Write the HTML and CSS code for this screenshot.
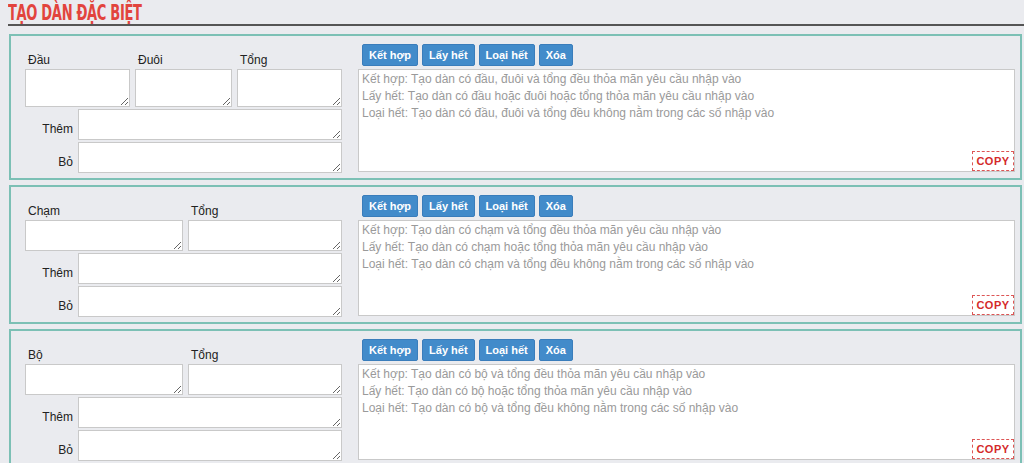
FILE: index.html
```html
<!DOCTYPE html>
<html lang="vi">
<head>
    <meta charset="UTF-8">
    <meta name="viewport" content="width=device-width, initial-scale=1.0">
    <title>Tạo dàn đặc biệt</title>
    <link rel="stylesheet" href="styles.css">
</head>
<body>
    <h1 class="title"><span>TẠO DÀN ĐẶC BIỆT</span></h1>

    <!-- Đầu / Đuôi / Tổng -->
    <div class="panel">
        <div class="inputs">
            <div class="top-row cols-3">
                <div class="field">
                    <label for="dau">Đầu</label>
                    <textarea id="dau" class="tall"></textarea>
                </div>
                <div class="field">
                    <label for="duoi">Đuôi</label>
                    <textarea id="duoi" class="tall"></textarea>
                </div>
                <div class="field">
                    <label for="tong1">Tổng</label>
                    <textarea id="tong1" class="tall"></textarea>
                </div>
            </div>
            <div class="side-row">
                <label for="them1">Thêm</label>
                <textarea id="them1"></textarea>
            </div>
            <div class="side-row">
                <label for="bo1">Bỏ</label>
                <textarea id="bo1"></textarea>
            </div>
        </div>
        <div class="result">
            <div class="actions">
                <button>Kết hợp</button>
                <button>Lấy hết</button>
                <button>Loại hết</button>
                <button>Xóa</button>
            </div>
            <div class="output">
                <textarea placeholder="Kết hợp: Tạo dàn có đầu, đuôi và tổng đều thỏa mãn yêu cầu nhập vào&#10;Lấy hết: Tạo dàn có đầu hoặc đuôi hoặc tổng thỏa mãn yêu cầu nhập vào&#10;Loại hết: Tạo dàn có đầu, đuôi và tổng đều không nằm trong các số nhập vào"></textarea>
                <span class="copy">COPY</span>
            </div>
        </div>
    </div>

    <!-- Chạm / Tổng -->
    <div class="panel">
        <div class="inputs">
            <div class="top-row cols-2">
                <div class="field">
                    <label for="cham">Chạm</label>
                    <textarea id="cham"></textarea>
                </div>
                <div class="field">
                    <label for="tong2">Tổng</label>
                    <textarea id="tong2"></textarea>
                </div>
            </div>
            <div class="side-row">
                <label for="them2">Thêm</label>
                <textarea id="them2"></textarea>
            </div>
            <div class="side-row">
                <label for="bo2">Bỏ</label>
                <textarea id="bo2"></textarea>
            </div>
        </div>
        <div class="result">
            <div class="actions">
                <button>Kết hợp</button>
                <button>Lấy hết</button>
                <button>Loại hết</button>
                <button>Xóa</button>
            </div>
            <div class="output">
                <textarea placeholder="Kết hợp: Tạo dàn có chạm và tổng đều thỏa mãn yêu cầu nhập vào&#10;Lấy hết: Tạo dàn có chạm hoặc tổng thỏa mãn yêu cầu nhập vào&#10;Loại hết: Tạo dàn có chạm và tổng đều không nằm trong các số nhập vào"></textarea>
                <span class="copy">COPY</span>
            </div>
        </div>
    </div>

    <!-- Bộ / Tổng -->
    <div class="panel">
        <div class="inputs">
            <div class="top-row cols-2">
                <div class="field">
                    <label for="bo">Bộ</label>
                    <textarea id="bo"></textarea>
                </div>
                <div class="field">
                    <label for="tong3">Tổng</label>
                    <textarea id="tong3"></textarea>
                </div>
            </div>
            <div class="side-row">
                <label for="them3">Thêm</label>
                <textarea id="them3"></textarea>
            </div>
            <div class="side-row">
                <label for="bo3">Bỏ</label>
                <textarea id="bo3"></textarea>
            </div>
        </div>
        <div class="result">
            <div class="actions">
                <button>Kết hợp</button>
                <button>Lấy hết</button>
                <button>Loại hết</button>
                <button>Xóa</button>
            </div>
            <div class="output">
                <textarea placeholder="Kết hợp: Tạo dàn có bộ và tổng đều thỏa mãn yêu cầu nhập vào&#10;Lấy hết: Tạo dàn có bộ hoặc tổng thỏa mãn yêu cầu nhập vào&#10;Loại hết: Tạo dàn có bộ và tổng đều không nằm trong các số nhập vào"></textarea>
                <span class="copy">COPY</span>
            </div>
        </div>
    </div>
</body>
</html>
```

FILE: styles.css
```css
body {
    margin: 0;
    background-color: #eaebef;
    font-family: "Liberation Sans", Arial, sans-serif;
    font-size: 12px;
    color: #222;
}
.title {
    margin: 0 0 8px 8px;
    padding-top: 2px;
    height: 22px;
    border-bottom: 2px solid #555;
    font-family: "Liberation Sans Narrow", "DejaVu Sans Condensed", sans-serif;
    font-size: 22px;
    font-weight: bold;
    line-height: 22px;
    color: #e2443d;
}
.title span {
    display: inline-block;
    transform: scaleX(0.66);
    transform-origin: left center;
    letter-spacing: -0.5px;
}
.panel {
    display: flex;
    gap: 16px;
    margin: 0 2px 5px 9px;
    padding: 8px 5px 5px 14px;
    border: 2px solid #7cc0b5;
}
.inputs {
    width: 317px;
    flex-shrink: 0;
}
textarea {
    display: block;
    box-sizing: border-box;
    width: 100%;
    height: 31px;
    margin: 0;
    padding: 2px 3px;
    border: 1px solid #c9c9c9;
    background-color: #fff;
    font-family: "Liberation Sans", Arial, sans-serif;
    font-size: 12px;
}
textarea.tall {
    height: 38px;
}
.top-row {
    display: grid;
    column-gap: 5px;
}
.cols-3 {
    grid-template-columns: 105px 97px 105px;
}
.cols-2 {
    grid-template-columns: 158px 154px;
}
.field label {
    display: block;
    height: 25px;
    box-sizing: border-box;
    padding: 9px 0 0 3px;
    line-height: 14px;
}
.side-row {
    display: flex;
    align-items: flex-end;
    margin-top: 2px;
}
.side-row label {
    width: 53px;
    flex-shrink: 0;
    box-sizing: border-box;
    padding: 0 5px 4px 0;
    text-align: right;
}
.result {
    flex: 1;
    display: flex;
    flex-direction: column;
}
.actions {
    display: flex;
    gap: 4px;
    height: 22px;
    margin: 0 0 3px 4px;
}
.actions button {
    padding: 0 6px;
    border: 1px solid #3a7dbb;
    border-radius: 2px;
    background-color: #428bca;
    color: #fff;
    font-family: "Liberation Sans", Arial, sans-serif;
    font-size: 11px;
    font-weight: bold;
    cursor: pointer;
}
.output {
    position: relative;
    flex: 1;
    margin-bottom: 1px;
}
.output textarea {
    height: 100%;
    resize: none;
    line-height: 17px;
    padding: 1px 3px;
}
.output textarea::placeholder {
    color: #9a9a9a;
}
.copy {
    position: absolute;
    right: 1px;
    bottom: 1px;
    width: 42px;
    height: 20px;
    box-sizing: border-box;
    border: 1px dashed #dd5555;
    background-color: #fff;
    color: #d42a2a;
    font-size: 11px;
    font-weight: bold;
    line-height: 18px;
    letter-spacing: 0.5px;
    text-align: center;
}
```
